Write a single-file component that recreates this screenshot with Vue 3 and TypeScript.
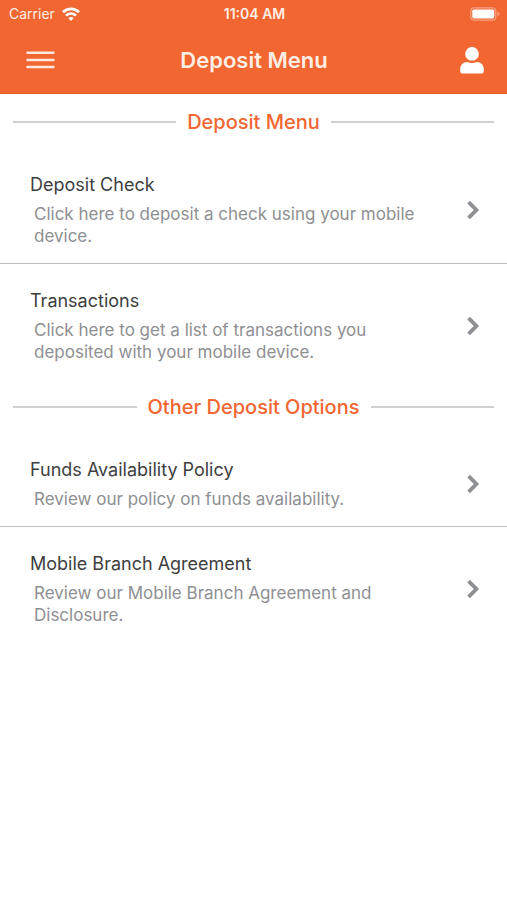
<script setup lang="ts">
interface MenuItem {
  title: string
  description: string
}

interface MenuSection {
  heading: string
  items: MenuItem[]
}

const sections: MenuSection[] = [
  {
    heading: 'Deposit Menu',
    items: [
      {
        title: 'Deposit Check',
        description: 'Click here to deposit a check using your mobile device.',
      },
      {
        title: 'Transactions',
        description: 'Click here to get a list of transactions you deposited with your mobile device.',
      },
    ],
  },
  {
    heading: 'Other Deposit Options',
    items: [
      {
        title: 'Funds Availability Policy',
        description: 'Review our policy on funds availability.',
      },
      {
        title: 'Mobile Branch Agreement',
        description: 'Review our Mobile Branch Agreement and Disclosure.',
      },
    ],
  },
]
</script>

<template>
  <div class="screen">
    <header class="header">
      <div class="status">
        <div class="carrier">
          <span>Carrier</span>
          <svg class="wifi" viewBox="0 0 18 14" width="18" height="14" aria-hidden="true">
            <g fill="none" stroke="currentColor" stroke-width="2.7">
              <path d="M1 5.2C5.6 .7 12.4 .7 17 5.2" />
              <path d="M4 8.6C6.8 5.8 11.2 5.8 14 8.6" />
            </g>
            <path d="M6.3 11.1C7.8 9.7 10.2 9.7 11.7 11.1L9 13.9z" fill="currentColor" />
          </svg>
        </div>
        <time class="clock">11:04 AM</time>
        <svg class="battery" viewBox="0 0 30 14" width="30" height="14" aria-hidden="true">
          <rect x=".8" y=".8" width="25" height="12.4" rx="3.4" fill="none" stroke="#fff" stroke-opacity=".4" stroke-width="1.2" />
          <rect x="2.3" y="2.4" width="22" height="9.2" rx="1.8" fill="#fff" />
          <path d="M27.4 4.8c2.6.8 2.6 3.6 0 4.4z" fill="#fff" fill-opacity=".4" />
        </svg>
      </div>
      <div class="bar">
        <button class="icon-button" type="button" aria-label="Open menu">
          <svg viewBox="0 0 29 18" width="29" height="18" aria-hidden="true">
            <path d="M1.5 1.7h26M1.5 8.9h26M1.5 16.1h26" stroke="#fff" stroke-opacity=".86" stroke-width="2.5" stroke-linecap="round" />
          </svg>
        </button>
        <h1 class="title">Deposit Menu</h1>
        <button class="icon-button" type="button" aria-label="Profile">
          <svg viewBox="0 0 24 27" width="24" height="27" aria-hidden="true">
            <circle cx="12" cy="6.9" r="6.8" fill="#fff" />
            <path d="M7.2 14.9c3 1.5 6.6 1.5 9.6 0 4 0 7 3 7 7v2.3c0 1.4-1 2.4-2.4 2.4H2.6C1.2 26.6.2 25.6.2 24.2v-2.3c0-4 3-7 7-7z" fill="#fff" />
          </svg>
        </button>
      </div>
    </header>

    <main>
      <section v-for="section in sections" :key="section.heading">
        <h2 class="heading">{{ section.heading }}</h2>
        <ul class="list">
          <li v-for="item in section.items" :key="item.title" class="row">
            <a class="item" href="#">
              <span class="text">
                <span class="name">{{ item.title }}</span>
                <span class="description">{{ item.description }}</span>
              </span>
              <svg class="chevron" viewBox="0 0 14 20" width="14" height="20" aria-hidden="true">
                <path d="M2.6 2.2 10.4 10l-7.8 7.8" fill="none" stroke="currentColor" stroke-width="3.8" />
              </svg>
            </a>
          </li>
        </ul>
      </section>
    </main>
  </div>
</template>

<style>
body {
  margin: 0;
  background: #fff;
}
</style>

<style scoped>
.screen {
  min-height: 100vh;
  background: #fff;
  font-family: Inter, "Liberation Sans", sans-serif;
}

.header {
  background: #f26631;
  color: #fff;
}

.status {
  display: grid;
  grid-template-columns: 1fr auto 1fr;
  align-items: center;
  height: 27px;
  padding: 0 7px 0 9px;
  font-size: 14px;
  color: #ffeee4;
}

.carrier {
  display: flex;
  align-items: center;
  gap: 7px;
}

.wifi {
  color: #fff;
}

.clock {
  font-weight: 600;
}

.battery {
  justify-self: end;
}

.bar {
  display: grid;
  grid-template-columns: 1fr auto 1fr;
  align-items: center;
  height: 66px;
  padding: 0 17px 0 22px;
  border-bottom: 1px solid #e2612f;
}

.icon-button {
  display: flex;
  align-items: center;
  justify-content: center;
  width: 36px;
  height: 44px;
  padding: 0;
  border: 0;
  background: none;
  cursor: pointer;
}

.icon-button:last-child {
  justify-self: end;
}

.title {
  margin: 0;
  padding-right: 4px;
  font-size: 22px;
  font-weight: 600;
  line-height: 28px;
  color: #ffeee4;
}

.heading {
  display: flex;
  align-items: center;
  gap: 11px;
  margin: 0;
  padding: 15px 13px 13px;
  font-size: 20px;
  font-weight: 500;
  line-height: 26px;
  color: #f26631;
}

.heading::before,
.heading::after {
  content: "";
  flex: 1;
  height: 2px;
  background: #d0d0d0;
}

.list {
  margin: 0;
  padding: 0;
  list-style: none;
}

.row + .row {
  border-top: 1px solid #c0c0c0;
}

.item {
  display: flex;
  align-items: center;
  justify-content: space-between;
  gap: 40px;
  padding: 25px 27px 16px 30px;
  color: inherit;
  text-decoration: none;
}

.text {
  display: flex;
  flex-direction: column;
  gap: 6px;
  max-width: 392px;
}

.name {
  font-size: 18px;
  line-height: 24px;
  color: #3e3e40;
}

.description {
  padding-left: 4px;
  font-size: 17px;
  line-height: 22px;
  color: #8e8f93;
}

.chevron {
  flex: none;
  color: #8e8f93;
}
</style>
